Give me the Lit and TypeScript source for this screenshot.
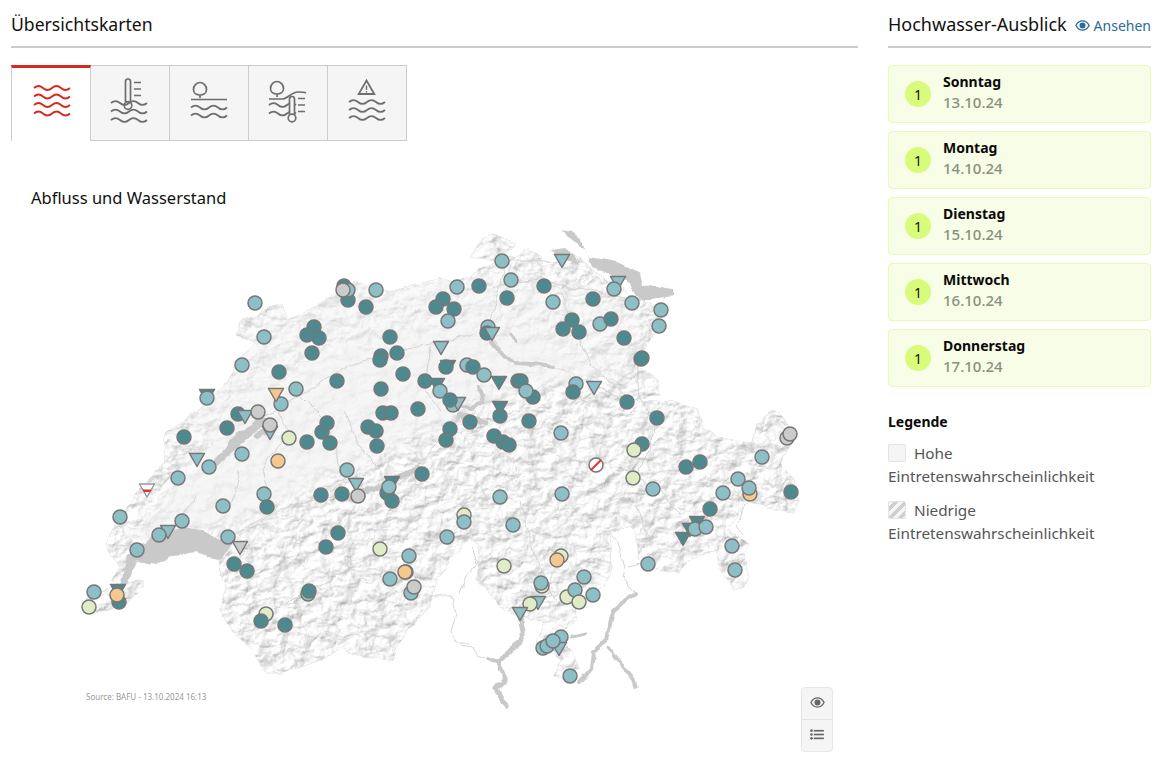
import { LitElement, html, css, svg } from "lit";
import { customElement } from "lit/decorators.js";

const outline =
  "83,603 90,595 110,590 122,585 112,580 120,567 107,547 110,533 140,490 147,483 165,460 165,433 198,410 230,377 237,360 257,343 235,337 240,323 262,312 282,305 287,320 317,307 337,290 357,283 390,292 423,283 438,277 453,283 470,275 497,260 470,257 480,240 493,235 517,243 503,255 517,258 527,250 540,255 540,267 560,263 580,258 600,275 637,298 657,307 657,333 640,353 637,367 657,380 660,393 637,400 673,402 697,408 703,430 727,440 753,443 757,423 773,410 783,417 793,433 788,447 780,465 795,480 798,500 793,513 775,510 760,505 747,503 727,530 747,543 745,560 750,577 743,587 732,587 720,567 717,550 690,560 677,573 660,570 638,560 635,530 630,525 610,533 612,567 603,587 573,600 578,620 560,632 580,667 570,680 553,678 560,660 537,643 545,620 523,617 503,610 477,580 480,547 470,537 455,555 437,578 433,597 423,613 403,637 390,660 363,657 343,648 320,660 290,670 280,675 267,673 253,650 233,632 220,610 227,587 217,560 197,552 170,555 157,565 137,560 127,583 143,582 143,588 127,603 113,610 90,612";

const lakes = [
  "233,545 217,560 197,552 170,555 157,565 137,560 127,583 120,585 127,557 150,537 183,527 203,530 223,540",
  "207,468 237,433 263,417 273,420 250,437 217,465",
  "563,230 570,232 583,243 590,257 617,262 640,273 643,285 673,290 673,297 653,300 640,300 630,283 593,267 587,250 570,240",
  "550,250 565,248 577,258 577,263 560,258",
];

// narrow lakes, drawn as thick lines: [points, width]
const narrowLakes: [string, number][] = [
  ["493,343 502,355 517,363 532,364 553,367", 4],
  ["510,333 515,342", 3],
  ["358,492 375,490 395,480 420,468", 6],
  ["460,415 475,419 487,423", 5],
  ["478,388 483,402 470,410 450,402", 4],
  ["258,436 275,425", 6],
  ["520,617 523,633 523,638 510,652 498,663 503,673 503,683 496,688 502,700 507,705", 5],
  ["487,658 498,663", 4],
  ["635,593 623,603 613,612 608,633 607,642 592,652 590,670 580,682", 4],
  ["610,648 623,667 633,680 635,687", 3],
  ["572,637 586,634", 3],
];

const rivers = [
  "433,597 453,597 458,613 452,633 457,643 470,643",
  "460,645 473,647 478,657 490,658",
  "473,548 477,563 467,577 460,593",
  "610,533 618,543 625,568 623,578 635,592",
  "628,567 642,564",
  "747,503 737,527 743,535",
  "223,543 250,525 290,505 330,497 350,490",
  "416,465 440,440 462,416",
  "263,417 300,395 350,365 420,345 470,335 490,320 500,285 540,280 590,290 640,300",
  "500,285 505,260 560,263",
  "637,367 636,385 642,398 630,402",
  "642,398 655,425 650,450 632,480",
  "492,334 505,357",
  "553,367 590,382 627,402",
  "560,290 575,330 590,365 625,395",
  "430,345 425,390 440,412",
  "345,410 358,445 380,470",
  "300,395 325,420 335,445 340,475",
  "275,405 288,430 262,470 270,500",
  "240,470 230,510",
  "130,560 180,522 195,495",
  "508,610 540,600 568,590",
  "262,625 290,600 308,590 350,570 390,570",
  "520,500 530,545 555,600",
  "700,540 660,490 640,480",
  "635,505 650,540",
];

type Kind = "d" | "l" | "g" | "o" | "x";
// kind, x, y, triangle?
const markers: [Kind, number, number, number?][] = [
  ["l", 255, 303], ["l", 264, 337], ["d", 344, 286], ["d", 348, 300], ["l", 348, 290], ["x", 343, 290],
  ["l", 376, 290], ["d", 366, 307], ["d", 314, 327], ["d", 307, 335], ["d", 319, 338], ["d", 312, 353],
  ["l", 242, 365], ["d", 279, 372], ["l", 296, 389], ["l", 281, 404], ["o", 276, 395, 1], ["d", 207, 396, 1], ["l", 207, 398],
  ["d", 238, 414], ["l", 245, 417, 1], ["x", 258, 412], ["d", 227, 428], ["l", 270, 433, 1], ["x", 270, 425],
  ["g", 289, 438], ["d", 184, 437], ["d", 307, 442], ["d", 322, 432], ["d", 327, 423], ["d", 330, 443],
  ["o", 278, 461], ["l", 242, 454], ["l", 197, 460, 1], ["l", 209, 467], ["l", 178, 478], ["l", 347, 470],
  ["d", 337, 381], ["d", 390, 337], ["d", 397, 353], ["d", 381, 356], ["d", 380, 360], ["d", 403, 374],
  ["d", 381, 389], ["d", 383, 413], ["d", 391, 413], ["d", 418, 409], ["d", 425, 381], ["d", 437, 385, 1],
  ["l", 440, 391], ["l", 453, 405], ["l", 458, 404, 1], ["d", 450, 400], ["d", 368, 427], ["d", 376, 431],
  ["d", 377, 446], ["d", 450, 429], ["d", 446, 440], ["d", 422, 474], ["d", 392, 483, 1], ["d", 387, 493],
  ["d", 392, 501], ["l", 389, 487], ["l", 356, 485, 1], ["x", 358, 496], ["d", 321, 495], ["d", 342, 494],
  ["l", 264, 494], ["d", 267, 507], ["l", 223, 506], ["l", 120, 517], ["l", 182, 521], ["l", 168, 532, 1],
  ["l", 159, 535], ["l", 137, 550], ["l", 228, 537], ["x", 240, 548, 1], ["d", 234, 564], ["d", 247, 571],
  ["d", 338, 533], ["d", 326, 547], ["g", 380, 549], ["l", 409, 556], ["l", 390, 579], ["d", 406, 572],
  ["o", 405, 572], ["l", 411, 593], ["x", 414, 587], ["l", 308, 594], ["d", 309, 591], ["g", 266, 614],
  ["d", 261, 621], ["d", 285, 625], ["l", 94, 592], ["g", 89, 607], ["d", 118, 591, 1], ["d", 119, 602],
  ["o", 117, 595], ["g", 464, 515], ["l", 464, 522], ["l", 447, 537], ["l", 457, 287], ["d", 443, 299],
  ["d", 436, 307], ["d", 454, 309], ["l", 448, 321], ["l", 441, 348, 1], ["d", 448, 367, 1], ["d", 446, 367],
  ["l", 502, 261], ["l", 562, 261, 1], ["l", 618, 283, 1], ["l", 614, 289], ["l", 511, 280], ["d", 479, 286],
  ["d", 544, 286], ["d", 507, 298], ["l", 553, 302], ["d", 593, 299], ["l", 632, 303], ["l", 661, 310],
  ["l", 659, 326], ["d", 572, 320], ["d", 563, 329], ["d", 579, 332], ["l", 600, 324], ["d", 611, 319],
  ["d", 624, 338], ["d", 641, 359], ["d", 642, 358], ["l", 488, 327], ["d", 487, 333], ["l", 492, 334, 1],
  ["l", 467, 365], ["d", 473, 367], ["l", 484, 375], ["d", 499, 383, 1], ["d", 518, 381], ["d", 521, 381],
  ["d", 533, 397], ["l", 526, 391], ["l", 576, 384], ["d", 573, 392], ["l", 594, 388, 1], ["d", 627, 402],
  ["d", 657, 418], ["d", 500, 416], ["d", 500, 408, 1], ["d", 470, 422], ["d", 529, 421], ["d", 494, 436],
  ["d", 503, 442], ["d", 509, 445], ["l", 561, 433], ["d", 642, 444], ["g", 634, 450], ["g", 633, 478],
  ["d", 686, 467], ["d", 700, 462], ["l", 762, 457], ["x", 787, 438], ["x", 790, 434], ["l", 500, 497],
  ["l", 562, 494], ["l", 653, 489], ["d", 710, 509], ["l", 723, 493], ["l", 738, 479], ["o", 750, 494],
  ["l", 749, 488], ["d", 791, 492], ["d", 697, 523, 1], ["d", 690, 530, 1], ["d", 683, 539, 1], ["l", 695, 529],
  ["l", 706, 527], ["l", 732, 546], ["l", 735, 570], ["l", 648, 564], ["l", 513, 525], ["g", 561, 556],
  ["o", 557, 560], ["g", 504, 566], ["l", 584, 577], ["g", 542, 586], ["l", 541, 583], ["g", 567, 597],
  ["l", 575, 590], ["g", 579, 602], ["l", 593, 595], ["l", 538, 603, 1], ["g", 530, 604], ["l", 520, 614, 1],
  ["l", 561, 637], ["l", 543, 648], ["l", 547, 646], ["l", 559, 649, 1], ["l", 553, 641], ["l", 570, 676],
];

const fills: Record<Kind, string> = {
  d: "#4d8a8f",
  l: "#8cbfc6",
  g: "#dfecc5",
  o: "#f6c88d",
  x: "#cbcbcb",
};

// one wave line, n half periods of 9px each
const wave = (x: number, y: number, n = 4) => {
  let d = `M${x} ${y}`;
  for (let i = 0; i < n; i++) d += i % 2 ? "c3 2.6 6 2.6 9 0" : "c3-2.6 6-2.6 9 0";
  return svg`<path d=${d} />`;
};

const tree = (x: number, y: number) =>
  svg`<path d="M${x} ${y + 12}c-3.6 0-6.5-2-6.5-5.500 0-3.600 2.900-7 6.500-7s6.500 3.400 6.500 7c0 3.500-2.900 5.500-6.500 5.500zM${x} ${y + 12}v3" />`;

const tabIcons = [
  svg`<g class="red">${wave(22, 20)}${wave(22, 28.5)}${wave(22, 37)}${wave(22, 45.5)}</g>`,
  svg`${wave(20, 37)}${wave(20, 45.5)}${wave(20, 54)}
    <path d="M34.5 36V15.5a2.5 2.5 0 0 1 5 0V36" />
    <circle cx="37" cy="39.5" r="3.8" />
    <path d="M43 16.5h7M43 23h7M43 29.5h7" />`,
  svg`${tree(30, 17)}<path d="M21 33.5h36" />${wave(21, 41.5)}${wave(21, 49.5)}`,
  svg`${tree(28, 16)}
    <path d="M20 33h13c6 0 9-7 16-7 3 0 6 0 8 1" />
    ${wave(20, 39, 3)}${wave(20, 47.5, 3)}
    <path d="M40.5 49V33a2.5 2.5 0 0 1 5 0v16" fill="#f5f5f5" />
    <circle cx="43" cy="52" r="3.8" fill="#f5f5f5" />
    <path d="M49 32.5h7M49 39h7M49 45.5h7" />`,
  svg`<path d="M38.5 14.5l7.8 13.5h-15.6z" stroke-width="1.8" />
    <path d="M38.5 19.5v4.5M38.5 25v1.500" stroke-width="1.4" />
    ${wave(21, 36)}${wave(21, 44)}${wave(21, 52)}`,
];

const days: [string, string][] = [
  ["Sonntag", "13.10.24"],
  ["Montag", "14.10.24"],
  ["Dienstag", "15.10.24"],
  ["Mittwoch", "16.10.24"],
  ["Donnerstag", "17.10.24"],
];

@customElement("app-root")
export class AppRoot extends LitElement {
  static override styles = css`
    :host {
      display: block;
      width: 1164px;
      height: 763px;
      overflow: hidden;
      font-family: "Noto Sans", "Open Sans", sans-serif;
      color: #111;
    }
    .page {
      display: grid;
      grid-template-columns: 847px 263px;
      column-gap: 30px;
      padding: 0 13px 0 11px;
    }
    .head {
      display: flex;
      align-items: center;
      justify-content: space-between;
      height: 48px;
      box-sizing: border-box;
      padding-top: 2px;
      border-bottom: 2px solid #ccc;
      font-size: 17.6px;
      white-space: nowrap;
    }
    aside .head span {
      font-size: 18px;
    }
    .head a {
      display: flex;
      align-items: center;
      gap: 4px;
      font-size: 14px;
      color: #2b6a99;
      padding-top: 2px;
    }
    .tabs {
      display: flex;
      margin-top: 17px;
    }
    .tab {
      width: 79px;
      height: 76px;
      box-sizing: border-box;
      background: #f5f5f5;
      border: 1px solid #ccc;
      border-left: none;
    }
    .tab svg {
      display: block;
      fill: none;
      stroke: #6e6e6e;
      stroke-width: 1.7;
    }
    .tab.active {
      width: 80px;
      background: #fff;
      border: none;
      border-left: 1px solid #ccc;
      border-right: 1px solid #ccc;
      border-top: 3px solid #d52b1e;
    }
    .tab .red {
      stroke: #d52b1e;
      stroke-width: 1.8;
    }
    h2 {
      margin: 46px 0 0 20px;
      font-size: 16.5px;
      line-height: 22px;
      font-weight: 400;
    }
    .map {
      position: relative;
      height: 541px;
    }
    .map svg.canvas {
      display: block;
    }
    .tools {
      position: absolute;
      left: 790px;
      top: 478px;
      width: 32px;
      border: 1px solid #e6e6e6;
      border-radius: 4px;
      background: #f5f5f5;
      box-sizing: border-box;
    }
    .tools div {
      display: flex;
      align-items: center;
      justify-content: center;
      height: 30px;
      padding-bottom: 1px;
      box-sizing: content-box;
    }
    .tools svg {
      margin-bottom: 2px;
    }
    .tools div + div {
      border-top: 1px solid #e2e2e2;
    }
    .cards {
      display: flex;
      flex-direction: column;
      gap: 8px;
      margin-top: 17px;
    }
    .card {
      display: flex;
      align-items: center;
      gap: 12px;
      height: 58px;
      box-sizing: border-box;
      padding: 0 16px;
      background: #f7fde6;
      border: 1px solid #e8fbb4;
      border-radius: 4px;
    }
    .badge {
      width: 26px;
      height: 26px;
      border-radius: 50%;
      background: #d9fb7b;
      display: flex;
      align-items: center;
      justify-content: center;
      font-size: 14px;
    }
    .day {
      font-size: 14px;
      line-height: 21px;
      font-weight: 700;
      color: #0a0a0a;
    }
    .date {
      font-size: 15px;
      line-height: 20px;
      font-weight: 500;
      color: #8a8f80;
    }
    .text {
      margin-top: -5px;
    }
    .legend {
      margin-top: 24px;
      font-size: 15.3px;
      line-height: 23px;
      color: #555;
    }
    .legend h3 {
      margin: 0 0 9px;
      font-size: 14px;
      line-height: 22px;
      font-weight: 700;
      color: #0a0a0a;
    }
    .legend p {
      margin: 0 0 11px;
    }
    .swatch {
      display: inline-block;
      width: 18px;
      height: 18px;
      box-sizing: border-box;
      margin-right: 8px;
      vertical-align: -3px;
      border: 1px solid #e4e4e4;
      border-radius: 2px;
      background: #f5f5f5;
    }
    .swatch.low {
      background: repeating-linear-gradient(135deg, #f5f5f5 0 3px, #cfcfcf 3px 7px);
    }
  `;

  private renderMarker([kind, x, y, tri]: [Kind, number, number, number?]) {
    if (tri) {
      return svg`<path d="M${x - 7.5} ${y - 6.5}h15l-7.5 13z" fill=${fills[kind]} stroke="#777" stroke-width="1.5" stroke-linejoin="round" />`;
    }
    return svg`<circle cx=${x} cy=${y} r="7" fill=${fills[kind]} stroke="#777" stroke-width="1.5" />`;
  }

  private renderMap() {
    return html`
      <svg class="canvas" width="847" height="541" viewBox="11 209 847 541">
        <defs>
          <clipPath id="ch"><polygon points=${outline} /></clipPath>
          <filter id="relief" x="0" y="0" width="100%" height="100%" color-interpolation-filters="sRGB">
            <feTurbulence type="fractalNoise" baseFrequency="0.06 0.08" numOctaves="5" seed="11" />
            <feDiffuseLighting surfaceScale="3.5" diffuseConstant="1.05" lighting-color="#fff">
              <feDistantLight azimuth="225" elevation="60" />
            </feDiffuseLighting>
            <feComponentTransfer>
              <feFuncR type="linear" slope="0.5" intercept="0.5" />
              <feFuncG type="linear" slope="0.5" intercept="0.5" />
              <feFuncB type="linear" slope="0.5" intercept="0.5" />
            </feComponentTransfer>
          </filter>
          <filter id="rough" x="-5%" y="-5%" width="110%" height="110%">
            <feTurbulence type="fractalNoise" baseFrequency="0.06" numOctaves="3" seed="4" result="n" />
            <feDisplacementMap in="SourceGraphic" in2="n" scale="7" xChannelSelector="R" yChannelSelector="G" />
          </filter>
          <filter id="soft"><feGaussianBlur stdDeviation="9" /></filter>
        </defs>
        <g filter="url(#rough)">
          <polygon points=${outline} fill="#f3f3f3" stroke="#dcdcdc" stroke-width="1" />
          <g clip-path="url(#ch)">
            <rect x="80" y="225" width="720" height="460" filter="url(#relief)" />
            <polygon points="125,545 235,410 350,350 480,320 640,370 500,395 350,470 240,525" fill="#f4f4f4" opacity="0.8" filter="url(#soft)" />
            <polygon points="165,450 240,330 340,290 470,270 640,300 640,360 480,330 250,420" fill="#f4f4f4" opacity="0.55" filter="url(#soft)" />
          </g>
          <g fill="none" stroke="#d4d4d4" stroke-width="1">
            ${rivers.map((r) => svg`<polyline points=${r} />`)}
          </g>
          <g fill="#c9c9c9">${lakes.map((l) => svg`<polygon points=${l} />`)}</g>
          <g fill="none" stroke="#c9c9c9" stroke-linejoin="round" stroke-linecap="round">
            ${narrowLakes.map(([p, w]) => svg`<polyline points=${p} stroke-width=${w} />`)}
          </g>
        </g>
        ${markers.map((m) => this.renderMarker(m))}
        <path d="M139.5 484h15l-7.5 13z" fill="#fff" stroke="#999" stroke-width="1.5" stroke-linejoin="round" />
        <path d="M142.5 489.5h9l-1.2 2.4h-6.6z" fill="#e8342a" />
        <circle cx="596" cy="465" r="7" fill="#fff" stroke="#777" stroke-width="1.5" />
        <path d="M591 470l10-10" stroke="#e8342a" stroke-width="2" />
        <text x="86" y="700" font-size="8" fill="#999">Source: BAFU - 13.10.2024 16:13</text>
      </svg>
    `;
  }

  override render() {
    return html`
      <div class="page">
        <section>
          <div class="head"><span>Übersichtskarten</span></div>
          <div class="tabs">
            ${tabIcons.map(
              (icon, i) => html`
                <div class="tab ${i === 0 ? "active" : ""}">
                  <svg width="78" height="74" viewBox="0 0 78 74">${icon}</svg>
                </div>
              `
            )}
          </div>
          <h2>Abfluss und Wasserstand</h2>
          <div class="map">
            ${this.renderMap()}
            <div class="tools">
              <div>
                <svg width="15" height="11" viewBox="0 0 16 12">
                  <path d="M.8 6C2.5 2.8 5 1 8 1s5.5 1.8 7.2 5c-1.7 3.2-4.2 5-7.2 5S2.5 9.2.8 6z" fill="none" stroke="#666" stroke-width="1.4" />
                  <circle cx="8" cy="6" r="3.3" fill="#666" />
                </svg>
              </div>
              <div>
                <svg width="14" height="11" viewBox="0 0 15 12" fill="#666">
                  <circle cx="1.5" cy="1.8" r="1.4" /><circle cx="1.5" cy="6" r="1.4" /><circle cx="1.5" cy="10.2" r="1.4" />
                  <rect x="4" y="1" width="11" height="1.8" /><rect x="4" y="5.1" width="11" height="1.8" /><rect x="4" y="9.3" width="11" height="1.8" />
                </svg>
              </div>
            </div>
          </div>
        </section>
        <aside>
          <div class="head">
            <span>Hochwasser-Ausblick</span>
            <a>
              <svg width="15" height="11" viewBox="0 0 16 12">
                <path d="M.8 6C2.5 2.8 5 1 8 1s5.5 1.8 7.2 5c-1.7 3.2-4.2 5-7.2 5S2.5 9.2.8 6z" fill="none" stroke="#2b6a99" stroke-width="1.5" />
                <circle cx="8" cy="6" r="3.3" fill="#2b6a99" />
              </svg>
              Ansehen
            </a>
          </div>
          <div class="cards">
            ${days.map(
              ([day, date]) => html`
                <div class="card">
                  <div class="badge">1</div>
                  <div class="text">
                    <div class="day">${day}</div>
                    <div class="date">${date}</div>
                  </div>
                </div>
              `
            )}
          </div>
          <div class="legend">
            <h3>Legende</h3>
            <p><span class="swatch"></span>Hohe Eintretenswahrscheinlichkeit</p>
            <p><span class="swatch low"></span>Niedrige Eintretenswahrscheinlichkeit</p>
          </div>
        </aside>
      </div>
    `;
  }
}
